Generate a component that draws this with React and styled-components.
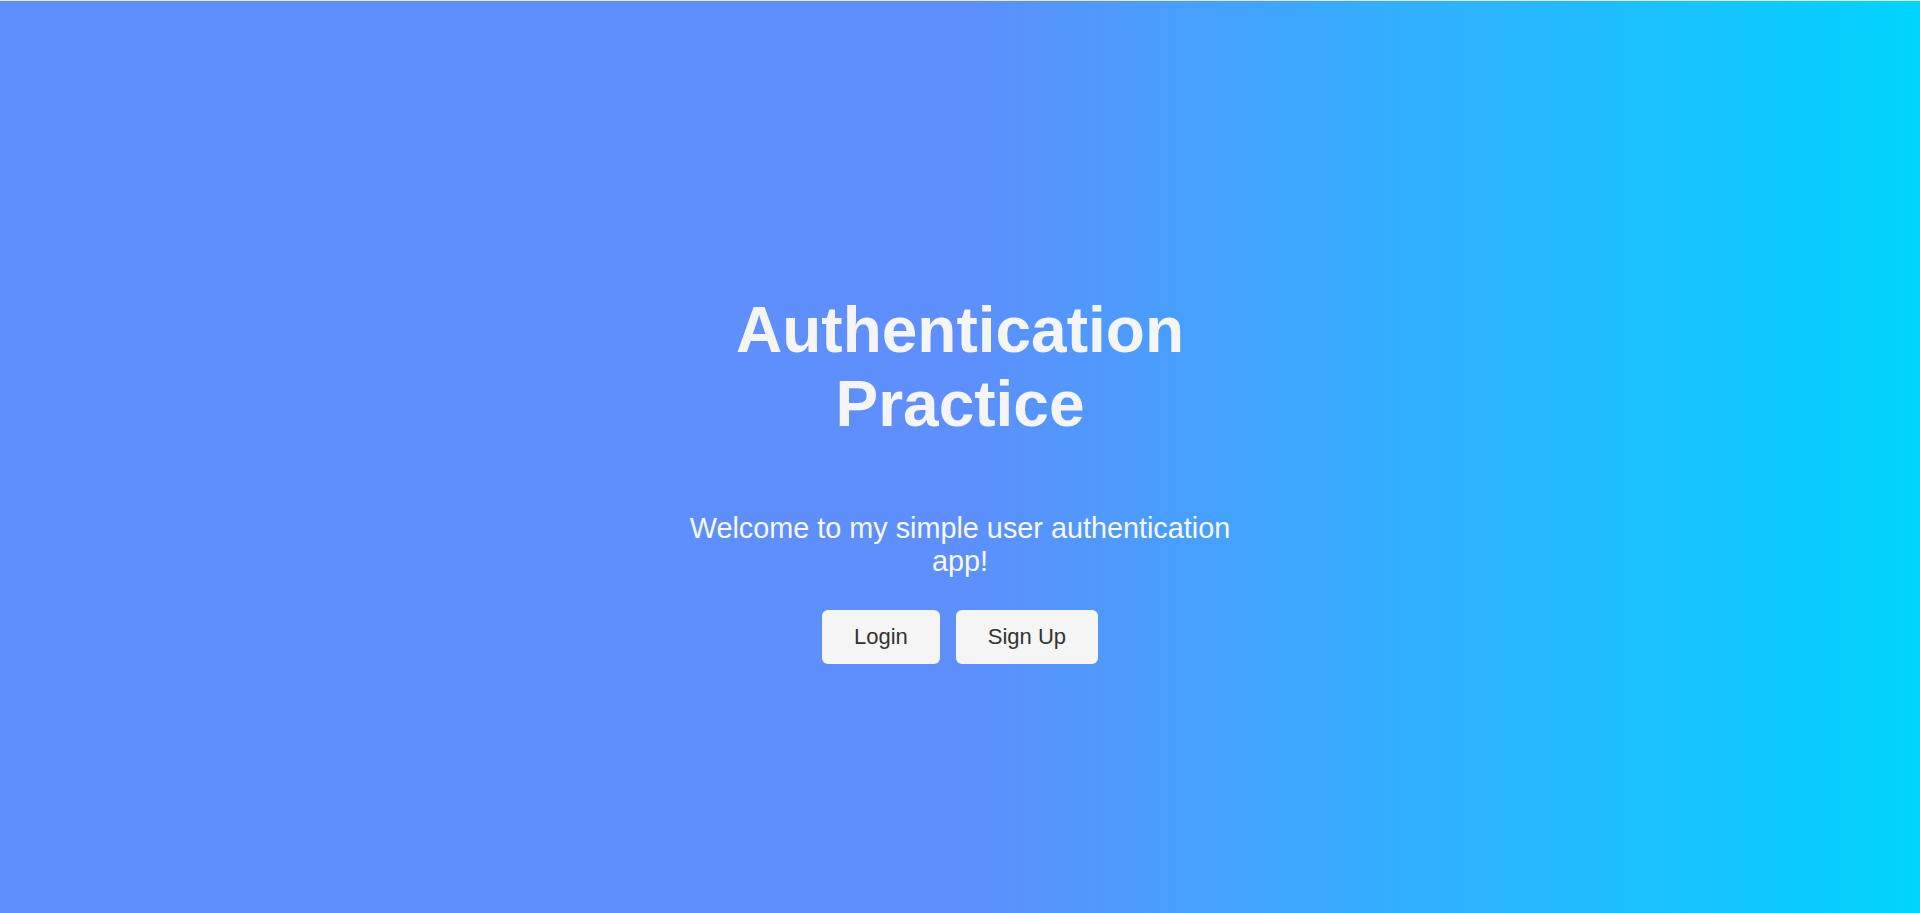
import React from 'react';
import styled, { createGlobalStyle } from 'styled-components';

const GlobalStyle = createGlobalStyle`
  body {
    margin: 0;
    background: #e6e6e6;
    font-family: 'Liberation Sans', Arial, sans-serif;
  }
`;

const HomeContainer = styled.div`
  display: flex;
  flex-direction: column;
  justify-content: center;
  align-items: center;
  min-height: 100vh;
  box-sizing: border-box;
  border-top: 1px solid #e6e6e6; /* thin strip at the very top */
  background: linear-gradient(90deg, #5e8ffc 50%, #00d4ff 100%);
  text-align: center;
`;

const Content = styled.div`
  display: flex;
  flex-direction: column;
  align-items: center;
  width: 560px;
`;

const Title = styled.h1`
  font-size: 64px;
  font-weight: bold;
  margin: 0.67em 0;
  color: #f5f5f5;
`;

const Subtitle = styled.p`
  font-size: 28.8px;
  margin: 1em 0;
  color: #f8f8f8;
`;

const ButtonRow = styled.div`
  display: flex;
  justify-content: center;
  gap: 16px;
  margin-top: 3px;
`;

const Button = styled.button`
  padding: 14px 32px;
  font-family: 'Liberation Sans', Arial, sans-serif;
  font-size: 22px;
  line-height: 26px;
  color: #333;
  background-color: #f5f5f5;
  border: none;
  border-radius: 6px;
  cursor: pointer;

  &:hover {
    background-color: #ffffff;
  }
`;

const App = () => {
  return (
    <HomeContainer>
      <GlobalStyle />
      <Content>
        <Title>Authentication Practice</Title>
        <Subtitle>Welcome to my simple user authentication app!</Subtitle>
        <ButtonRow>
          <Button>Login</Button>
          <Button>Sign Up</Button>
        </ButtonRow>
      </Content>
    </HomeContainer>
  );
};

export default App;
